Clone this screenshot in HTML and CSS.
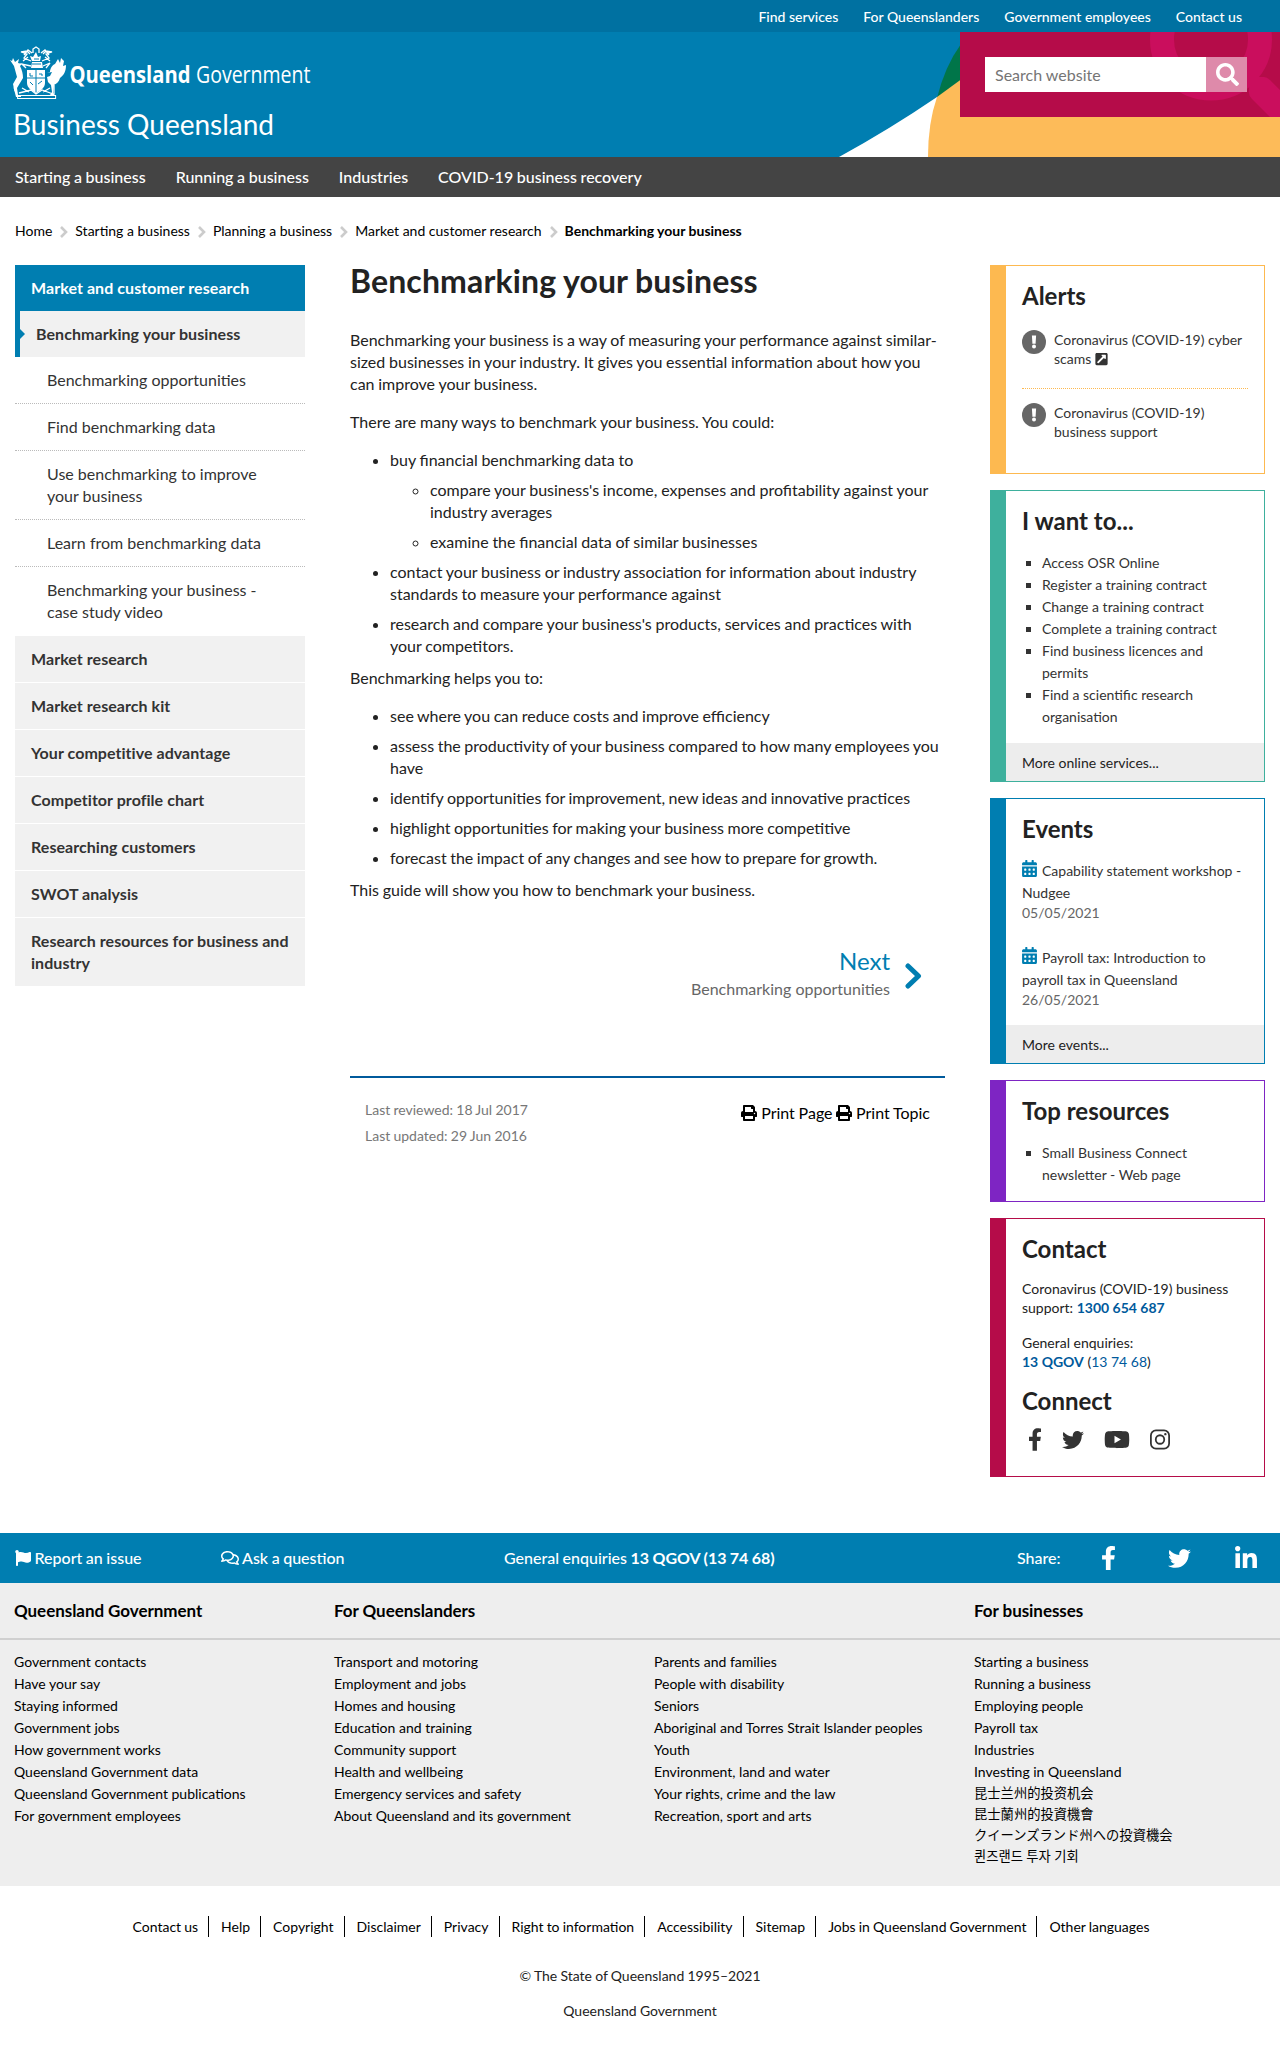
FILE: index.html
```html
<!DOCTYPE html>
<html lang="en">
<head>
<meta charset="utf-8">
<title>Benchmarking your business | Business Queensland</title>
<link rel="stylesheet" href="styles.css">
</head>
<body>
<svg class="defs" width="0" height="0" aria-hidden="true">
  <symbol id="i-search" viewBox="0 0 512 512"><path d="M505 442.7L405.300 343c-4.500-4.500-10.600-7-17-7H372c27.600-35.300 44-79.700 44-128C416 93.100 322.900 0 208 0S0 93.100 0 208s93.100 208 208 208c48.300 0 92.700-16.400 128-44v16.300c0 6.400 2.500 12.500 7 17l99.700 99.700c9.400 9.400 24.600 9.400 33.900 0l28.300-28.300c9.400-9.400 9.400-24.600.1-34zM208 336c-70.700 0-128-57.200-128-128 0-70.700 57.200-128 128-128 70.700 0 128 57.200 128 128 0 70.700-57.200 128-128 128z"/></symbol>
  <symbol id="i-fb" viewBox="0 0 320 512"><path d="M279.140 288l14.220-92.660h-88.910v-60.130c0-25.350 12.420-50.060 52.240-50.060h40.420V6.260S260.430 0 225.360 0c-73.220 0-121.080 44.380-121.080 124.720v70.620H22.890V288h81.390v224h100.170V288z"/></symbol>
  <symbol id="i-tw" viewBox="0 0 512 512"><path d="M459.370 151.716c.325 4.548.325 9.097.325 13.645 0 138.720-105.583 298.558-298.558 298.558-59.452 0-114.680-17.219-161.137-47.106 8.447.974 16.568 1.299 25.340 1.299 49.055 0 94.213-16.568 130.274-44.832-46.132-.975-84.792-31.188-98.112-72.772 6.498.974 12.995 1.624 19.818 1.624 9.421 0 18.843-1.300 27.614-3.573-48.081-9.747-84.143-51.980-84.143-102.985v-1.299c13.969 7.797 30.214 12.670 47.431 13.319-28.264-18.843-46.781-51.005-46.781-87.391 0-19.492 5.197-37.360 14.294-52.954 51.655 63.675 129.300 105.258 216.365 109.807-1.624-7.797-2.599-15.918-2.599-24.040 0-57.828 46.782-104.934 104.934-104.934 30.213 0 57.502 12.670 76.670 33.137 23.715-4.548 46.456-13.320 66.599-25.340-7.798 24.366-24.366 44.833-46.132 57.827 21.117-2.273 41.584-8.122 60.426-16.243-14.292 20.791-32.161 39.308-52.628 54.253z"/></symbol>
  <symbol id="i-yt" viewBox="0 0 576 512"><path d="M549.655 124.083c-6.281-23.650-24.787-42.276-48.284-48.597C458.781 64 288 64 288 64S117.220 64 74.629 75.486c-23.497 6.322-42.003 24.947-48.284 48.597-11.412 42.867-11.412 132.305-11.412 132.305s0 89.438 11.412 132.305c6.281 23.650 24.787 41.500 48.284 47.821C117.220 448 288 448 288 448s170.780 0 213.371-11.486c23.497-6.321 42.003-24.171 48.284-47.821 11.412-42.867 11.412-132.305 11.412-132.305s0-89.438-11.412-132.305zm-317.510 213.508V175.185l142.739 81.205-142.739 81.201z"/></symbol>
  <symbol id="i-ig" viewBox="0 0 448 512"><path fill-rule="evenodd" d="M132 32h184a132 132 0 0 1 132 132v184a132 132 0 0 1-132 132H132A132 132 0 0 1 0 348V164A132 132 0 0 1 132 32zm3 40a95 95 0 0 0-95 95v178a95 95 0 0 0 95 95h178a95 95 0 0 0 95-95V167a95 95 0 0 0-95-95zM224 141a115 115 0 1 1 0 230 115 115 0 0 1 0-230zm0 40a75 75 0 1 0 0 150 75 75 0 0 0 0-150zM344 109a27 27 0 1 1 0 54 27 27 0 0 1 0-54z"/></symbol>
  <symbol id="i-in" viewBox="0 0 448 512"><path d="M100.280 448H7.400V148.900h92.880zM53.790 108.100C24.090 108.100 0 83.500 0 53.800a53.790 53.790 0 0 1 107.580 0c0 29.700-24.100 54.300-53.790 54.300zM447.900 448h-92.680V302.400c0-34.700-.7-79.200-48.290-79.200-48.290 0-55.690 37.700-55.690 76.700V448h-92.780V148.900h89.080v40.800h1.300c12.400-23.500 42.690-48.300 87.880-48.300 94 0 111.280 61.900 111.280 142.300V448z"/></symbol>
  <symbol id="i-flag" viewBox="0 0 512 512"><path d="M349.565 98.783C295.978 98.783 251.721 64 184.348 64c-24.955 0-47.309 4.384-68.045 12.013a55.947 55.947 0 0 0 3.586-23.562C118.117 24.015 94.806 1.206 66.338.048 34.345-1.254 8 24.296 8 56c0 19.026 9.497 35.825 24 45.945V488c0 13.255 10.745 24 24 24h16c13.255 0 24-10.745 24-24v-94.400c28.311-12.064 63.582-22.122 114.435-22.122 53.588 0 97.844 34.783 165.217 34.783 48.169 0 86.667-16.294 122.505-40.858C506.840 359.452 512 349.571 512 339.045v-243.100c0-23.393-24.269-38.870-45.485-29.016-34.338 15.948-76.454 31.854-116.950 31.854z"/></symbol>
  <symbol id="i-chat" viewBox="0 0 576 512"><path d="M532 386.200c27.500-27.100 44-61.100 44-98.200 0-80-76.500-146.100-176.200-157.900C368.300 72.500 294.300 32 208 32 93.100 32 0 103.600 0 192c0 37 16.500 71 44 98.200-15.300 30.700-37.300 54.500-37.700 54.900-6.300 6.700-8.100 16.500-4.400 25 3.600 8.500 12 14 21.200 14 53.500 0 96.700-20.200 125.200-38.800 9.200 2.100 18.700 3.700 28.400 4.900C208.100 407.600 281.800 448 368 448c20.800 0 40.800-2.400 59.800-6.800C456.300 459.700 499.400 480 553 480c9.200 0 17.500-5.500 21.200-14 3.600-8.500 1.900-18.300-4.400-25-.4-.3-22.500-24.100-37.800-54.800zm-392.800-92.300L122.100 305c-14.100 9.100-28.500 16.300-43.100 21.400 2.700-4.700 5.400-9.700 8-14.800l15.500-31.100L77.700 256C64.200 242.600 48 220.700 48 192c0-60.700 73.300-112 160-112s160 51.300 160 112-73.300 112-160 112c-16.500 0-33-1.900-49-5.600l-19.800-4.500zM498.300 352l-24.700 24.400 15.500 31.100c2.600 5.100 5.300 10.100 8 14.800-14.600-5.100-29-12.300-43.100-21.400l-17.100-11.100-19.900 4.600c-16 3.700-32.500 5.600-49 5.600-54 0-102.200-20.100-131.300-49.700C338 339.500 416 272.900 416 192c0-3.400-.4-6.700-.7-10C479.700 196.500 528 238.800 528 288c0 28.700-16.200 50.600-29.700 64z"/></symbol>
  <symbol id="i-print" viewBox="0 0 512 512"><path d="M448 192V77.250c0-8.490-3.370-16.620-9.370-22.630L393.370 9.370c-6-6-14.140-9.370-22.630-9.370H96C78.330 0 64 14.330 64 32v160c-35.350 0-64 28.650-64 64v112c0 8.840 7.160 16 16 16h48v96c0 17.670 14.330 32 32 32h320c17.670 0 32-14.330 32-32v-96h48c8.840 0 16-7.160 16-16V256c0-35.350-28.650-64-64-64zm-64 256H128v-96h256v96zm0-224H128V64h192v48c0 8.840 7.160 16 16 16h48v96zm48 72c-13.250 0-24-10.750-24-24 0-13.260 10.750-24 24-24s24 10.740 24 24c0 13.250-10.750 24-24 24z"/></symbol>
  <symbol id="i-cal" viewBox="0 0 448 512"><path fill-rule="evenodd" d="M0 464c0 26.500 21.500 48 48 48h352c26.500 0 48-21.500 48-48V192H0zM64 268a12 12 0 0 1 12-12h40a12 12 0 0 1 12 12v40a12 12 0 0 1-12 12H76a12 12 0 0 1-12-12zm128 0a12 12 0 0 1 12-12h40a12 12 0 0 1 12 12v40a12 12 0 0 1-12 12h-40a12 12 0 0 1-12-12zm128 0a12 12 0 0 1 12-12h40a12 12 0 0 1 12 12v40a12 12 0 0 1-12 12h-40a12 12 0 0 1-12-12zM64 396a12 12 0 0 1 12-12h40a12 12 0 0 1 12 12v40a12 12 0 0 1-12 12H76a12 12 0 0 1-12-12zm128 0a12 12 0 0 1 12-12h40a12 12 0 0 1 12 12v40a12 12 0 0 1-12 12h-40a12 12 0 0 1-12-12zm128 0a12 12 0 0 1 12-12h40a12 12 0 0 1 12 12v40a12 12 0 0 1-12 12h-40a12 12 0 0 1-12-12zM400 64h-48V16c0-8.800-7.200-16-16-16h-32c-8.800 0-16 7.200-16 16v48H160V16c0-8.800-7.200-16-16-16h-32c-8.800 0-16 7.200-16 16v48H48C21.500 64 0 85.500 0 112v48h448v-48c0-26.500-21.500-48-48-48z"/></symbol>
  <symbol id="i-ext" viewBox="0 0 448 512"><path d="M448 80v352c0 26.510-21.490 48-48 48H48c-26.510 0-48-21.490-48-48V80c0-26.510 21.490-48 48-48h352c26.510 0 48 21.490 48 48zm-88 16H248.029c-21.313 0-32.080 25.861-16.971 40.971l31.984 31.987L67.515 364.485c-4.686 4.686-4.686 12.284 0 16.971l31.029 31.029c4.687 4.686 12.285 4.686 16.971 0l195.526-195.526 31.988 31.991C358.058 263.977 384 253.425 384 231.979V120c0-13.255-10.745-24-24-24z"/></symbol>
  <symbol id="i-exc" viewBox="0 0 24 24"><circle cx="12" cy="12" r="12"/><path fill="#fff" d="M9.900 5.500h4.200l-.5 8.300h-3.200z"/><circle cx="12" cy="16.500" r="2" fill="#fff"/></symbol>
  <symbol id="i-chev" viewBox="0 0 8 12"><path fill="none" stroke="currentColor" stroke-width="2.600" d="M1 1l5 5-5 5"/></symbol>
</svg>

<header>
  <ul class="topnav"><li>Find services</li><li>For Queenslanders</li><li>Government employees</li><li>Contact us</li></ul>
  <div class="banner">
    <svg class="swoosh" width="444" height="125" viewBox="836 32 444 125" aria-hidden="true">
      <path fill="#fff" d="M839 157Q890 129 937 97L966 100V157z"/>
      <path fill="#007549" d="M961 44Q945 66 937 98L961 90z"/>
      <path fill="#fdbb59" d="M928 157Q928 123 937 97L961 79.500L1280 80V157z"/>
    </svg>
    <div class="brand">
      <svg width="320" height="68" viewBox="0 36 320 68" role="img" aria-label="Queensland Government">
        <g fill="#fff">
          <path d="M14 66l-4-6 2 1 1-3 2 4 4-3-1 4 4 1-2 2c2 4 3 8 3 12l-3 5-3 5 1 7h3v2h-5l-2-8-1-5 4-7z"/>
          <path d="M50 72c0-3 2-7 5-8l3-5 2 4 1-5 3 3-1 5 3-1c0 6-2 10-6 13-1 4-4 6-6 7l-1 8 2 2h-5l2-3-1-7-3-3-1-5 3-1 2-4-5 1z"/>
          <path d="M27 70h18v13c0 5-5 8-9 10-4-2-9-5-9-10z"/>
          <path d="M31 68l1-6h10l1 6zM32 61l-2-5 3 1 3-5 2 5 3-1-1 5z"/>
        </g>
        <g fill="none" stroke="#fff" stroke-width="1.300">
          <path d="M31 61l-7-3 3-4-6-2 6-1 3 3M42 61l7-3-3-4 6-2-6-1-3 3M31 66l-9-2 4 4M43 66l7-3-4 5M33 53v-4l3-2 3 2v4M28 57l-5 4M45 57l5 4M24 55l4-5 4 3M49 55l-4-5-4 3"/>
          <path d="M17 84c-4 2-3 7 0 9M54 85v9M19 93l12-3 5 4 6-4 11 4M22 88l7 4M50 88l-7 4"/>
          <rect x="17.600" y="95.500" width="38" height="3" stroke-width="1"/>
        </g>
        <g stroke="#007eb1" stroke-width="1" fill="none"><path d="M36 70v22M27 78h18M30 73v3h3M39 74h3v2M30 82l3 3M42 81l-4 3M32 64h9M34 59h5"/></g>
        <text class="logo-b" x="69.500" y="82.500" textLength="121" lengthAdjust="spacingAndGlyphs">Queensland</text>
        <text class="logo-r" x="196" y="82.500" textLength="114.500" lengthAdjust="spacingAndGlyphs">Government</text>
      </svg>
      <div class="site">Business Queensland</div>
    </div>
    <div class="search">
      <svg class="ring" width="320" height="85" viewBox="960 32 320 85" aria-hidden="true"><circle cx="1211" cy="39.500" r="49" fill="none" stroke="#ca0e5d" stroke-width="24"/><path fill="#ca0e5d" d="M1250 77h14q3 0 6 3l10 10v27h-10l-18-18q-4-4-3-9z"/></svg>
      <div class="searchbox"><span>Search website</span><b><svg width="23" height="23"><use href="#i-search"/></svg></b></div>
    </div>
  </div>
  <ul class="mainnav"><li>Starting a business</li><li>Running a business</li><li>Industries</li><li>COVID-19 business recovery</li></ul>
</header>

<ol class="crumbs">
  <li>Home</li><li><svg width="8" height="12"><use href="#i-chev"/></svg>Starting a business</li><li><svg width="8" height="12"><use href="#i-chev"/></svg>Planning a business</li><li><svg width="8" height="12"><use href="#i-chev"/></svg>Market and customer research</li><li class="here"><svg width="8" height="12"><use href="#i-chev"/></svg>Benchmarking your business</li>
</ol>

<div class="page">
  <nav class="side">
    <div class="head">Market and customer research</div>
    <div class="current">Benchmarking your business</div>
    <ul class="sub"><li>Benchmarking opportunities</li><li>Find benchmarking data</li><li>Use benchmarking to improve your business</li><li>Learn from benchmarking data</li><li>Benchmarking your business - case study video</li></ul>
    <ul class="more"><li>Market research</li><li>Market research kit</li><li>Your competitive advantage</li><li>Competitor profile chart</li><li>Researching customers</li><li>SWOT analysis</li><li>Research resources for business and industry</li></ul>
  </nav>

  <main>
    <h1>Benchmarking your business</h1>
    <p>Benchmarking your business is a way of measuring your performance against similar-sized businesses in your industry. It gives you essential information about how you can improve your business.</p>
    <p>There are many ways to benchmark your business. You could:</p>
    <ul>
      <li>buy financial benchmarking data to
        <ul><li>compare your business's income, expenses and profitability against your industry averages</li><li>examine the financial data of similar businesses</li></ul></li>
      <li>contact your business or industry association for information about industry standards to measure your performance against</li>
      <li>research and compare your business's products, services and practices with your competitors.</li>
    </ul>
    <p>Benchmarking helps you to:</p>
    <ul>
      <li>see where you can reduce costs and improve efficiency</li>
      <li>assess the productivity of your business compared to how many employees you have</li>
      <li>identify opportunities for improvement, new ideas and innovative practices</li>
      <li>highlight opportunities for making your business more competitive</li>
      <li>forecast the impact of any changes and see how to prepare for growth.</li>
    </ul>
    <p>This guide will show you how to benchmark your business.</p>
    <div class="next">
      <div><div class="next-label">Next</div><div class="next-title">Benchmarking opportunities</div></div>
      <svg width="17" height="26" viewBox="0 0 17 26"><path d="M3 3l10.500 10L3 23" fill="none" stroke="#007eb1" stroke-width="5" stroke-linecap="round" stroke-linejoin="round"/></svg>
    </div>
    <div class="meta">
      <div class="dates"><div>Last reviewed: 18 Jul 2017</div><div>Last updated: 29 Jun 2016</div></div>
      <div class="print"><svg width="16" height="16"><use href="#i-print"/></svg> <span>Print Page</span> <svg width="16" height="16"><use href="#i-print"/></svg> <span>Print Topic</span></div>
    </div>
  </main>

  <aside>
    <section class="card alerts">
      <h2>Alerts</h2>
      <div class="alert"><svg width="24" height="24"><use href="#i-exc"/></svg><span>Coronavirus (COVID-19) cyber scams <svg class="ext" width="13" height="14"><use href="#i-ext"/></svg></span></div>
      <div class="alert"><svg width="24" height="24"><use href="#i-exc"/></svg><span>Coronavirus (COVID-19) business support</span></div>
    </section>
    <section class="card want">
      <h2>I want to...</h2>
      <ul><li>Access OSR Online</li><li>Register a training contract</li><li>Change a training contract</li><li>Complete a training contract</li><li>Find business licences and permits</li><li>Find a scientific research organisation</li></ul>
      <div class="foot">More online services...</div>
    </section>
    <section class="card events">
      <h2>Events</h2>
      <div class="event"><svg width="15" height="17"><use href="#i-cal"/></svg>Capability statement workshop - Nudgee<time>05/05/2021</time></div>
      <div class="event"><svg width="15" height="17"><use href="#i-cal"/></svg>Payroll tax: Introduction to payroll tax in Queensland<time>26/05/2021</time></div>
      <div class="foot">More events...</div>
    </section>
    <section class="card top">
      <h2>Top resources</h2>
      <ul><li>Small Business Connect newsletter - Web page</li></ul>
    </section>
    <section class="card contact">
      <h2>Contact</h2>
      <p>Coronavirus (COVID-19) business support: <a><b>1300 654 687</b></a></p>
      <p>General enquiries:<br><a><b>13 QGOV</b></a> (<a>13 74 68</a>)</p>
      <h2>Connect</h2>
      <div class="social"><svg width="14" height="23"><use href="#i-fb"/></svg><svg width="22" height="22"><use href="#i-tw"/></svg><svg width="26" height="23"><use href="#i-yt"/></svg><svg width="20" height="23"><use href="#i-ig"/></svg></div>
    </section>
  </aside>
</div>

<footer>
  <div class="bar">
    <span class="report"><svg width="16" height="16"><use href="#i-flag"/></svg> Report an issue</span>
    <span class="ask"><svg width="18" height="16"><use href="#i-chat"/></svg> Ask a question</span>
    <span class="enq">General enquiries <b>13 QGOV (13 74 68)</b></span>
    <span class="share">Share:<svg class="s1" width="15" height="24"><use href="#i-fb"/></svg><svg class="s2" width="23" height="23"><use href="#i-tw"/></svg><svg class="s3" width="22" height="25"><use href="#i-in"/></svg></span>
  </div>
  <div class="sitemap">
    <div class="heads"><h3>Queensland Government</h3><h3>For Queenslanders</h3><h3></h3><h3>For businesses</h3></div>
    <div class="cols">
      <ul><li>Government contacts</li><li>Have your say</li><li>Staying informed</li><li>Government jobs</li><li>How government works</li><li>Queensland Government data</li><li>Queensland Government publications</li><li>For government employees</li></ul>
      <ul><li>Transport and motoring</li><li>Employment and jobs</li><li>Homes and housing</li><li>Education and training</li><li>Community support</li><li>Health and wellbeing</li><li>Emergency services and safety</li><li>About Queensland and its government</li></ul>
      <ul><li>Parents and families</li><li>People with disability</li><li>Seniors</li><li>Aboriginal and Torres Strait Islander peoples</li><li>Youth</li><li>Environment, land and water</li><li>Your rights, crime and the law</li><li>Recreation, sport and arts</li></ul>
      <ul><li>Starting a business</li><li>Running a business</li><li>Employing people</li><li>Payroll tax</li><li>Industries</li><li>Investing in Queensland</li><li class="cjk" lang="zh-CN">昆士兰州的投资机会</li><li class="cjk" lang="zh-TW">昆士蘭州的投資機會</li><li class="cjk" lang="ja">クイーンズランド州への投資機会</li><li class="cjk" lang="ko">퀸즈랜드 투자 기회</li></ul>
    </div>
  </div>
  <ul class="legal"><li>Contact us</li><li>Help</li><li>Copyright</li><li>Disclaimer</li><li>Privacy</li><li>Right to information</li><li>Accessibility</li><li>Sitemap</li><li>Jobs in Queensland Government</li><li>Other languages</li></ul>
  <p class="copy">© The State of Queensland 1995–2021</p>
  <p class="copy qg">Queensland Government</p>
</footer>
</body>
</html>
```
FILE: styles.css
```css
* { box-sizing: border-box; }
body { margin: 0; font: 15px/22px Lato, "Noto Sans CJK SC", sans-serif; color: #222; background: #fff; }
ul, ol { margin: 0; padding: 0; list-style: none; }
h1, h2, h3, p { margin: 0; }
svg { fill: currentColor; flex: none; }
.defs { position: absolute; }

.topnav { height: 32px; background: #0071a1; color: #fff; display: flex; justify-content: flex-end; gap: 25px; padding: 0 38px 0 0; font-size: 14px; font-weight: 500; line-height: 34px; }
.banner { position: relative; height: 125px; background: #007eb1; display: flex; justify-content: space-between; }
.swoosh { position: absolute; right: 0; top: 0; }
.brand { padding-top: 4px; color: #fff; height: 125px; }
.brand svg { display: block; overflow: visible; }
.logo-b, .logo-r { font-family: "Open Sans", sans-serif; font-size: 23px; fill: #fff; }
.logo-b { font-weight: 700; }
.site { font-size: 28px; line-height: 34px; padding: 3px 0 0 13px; }
.search { position: relative; width: 320px; height: 85px; background: #b50c49; padding: 25px 0 0 25px; }
.ring { position: absolute; left: 0; top: 0; }
.searchbox { position: relative; display: flex; width: 262px; height: 35px; background: #fff; color: #757575; font-size: 16px; line-height: 36px; }
.searchbox span { width: 221px; padding-left: 10px; }
.searchbox b { width: 41px; background: #de8aaa; color: #fff; display: flex; justify-content: center; padding: 6px 0 0 1px; }
.mainnav { height: 40px; background: #444; color: #fff; display: flex; gap: 30px; padding-left: 15px; font-size: 16px; font-weight: 500; line-height: 40px; word-spacing: -.4px; }

.crumbs { display: flex; padding: 23px 15px 0; font-size: 14px; color: #000; line-height: 22px; }
.crumbs svg { color: #ccc; margin: 0 7px 0 8px; vertical-align: -2px; }
.here { font-weight: 700; }

.page { display: grid; grid-template-columns: 290px 595px 275px; column-gap: 45px; padding: 23px 15px 0; height: 1291px; align-items: start; }
.side { font-size: 16px; color: #333; }
.head { background: #007eb1; color: #fff; font-weight: 700; padding: 12px 16px; letter-spacing: .07px; }
.current { position: relative; background: #f1f1f1; border-left: 5px solid #007eb1; font-weight: 700; padding: 12px 16px; letter-spacing: .07px; }
.current::before { content: ""; position: absolute; left: 0; top: 18px; border: 5px solid transparent; border-left-color: #007eb1; border-right: 0; }
.sub li { padding: 12px 32px; border-bottom: 1px dotted #bbb; }
.sub li:last-child { border-color: transparent; }
.more li { padding: 12px 8px 12px 16px; background: #f1f1f1; font-weight: 700; border-bottom: 1px solid #fff; letter-spacing: .05px; }
.more li:last-child { border: 0; }

h1 { font-size: 32px; line-height: 32px; font-weight: 700; margin-bottom: 32px; letter-spacing: .13px; }
main { font-size: 16px; word-spacing: -.35px; }
main p { margin-bottom: 16px; }
main ul { list-style: disc; padding-left: 40px; margin-bottom: 10px; }
main ul ul { list-style: circle; margin: 8px 0; }
main li { margin-bottom: 8px; }
main p + ul ~ p + ul { word-spacing: -.55px; }
.next { display: flex; justify-content: flex-end; align-items: center; gap: 15px; padding: 29px 23px 0 0; text-align: right; color: #666; word-spacing: 0; }
.next svg { margin-top: 5px; }
.next-label { font-size: 24px; line-height: 30px; color: #007eb1; }
.next-title { line-height: 25px; }
.meta { margin-top: 75px; border-top: 2px solid #005a9c; padding: 19px 15px; display: flex; justify-content: space-between; }
.dates { font-size: 14px; line-height: 26px; color: #777; }
.print { color: #000; line-height: 31px; }
.print svg { vertical-align: -2px; }

aside { display: grid; row-gap: 16px; font-size: 14px; line-height: 22px; }
.card { border: 1px solid; border-left-width: 16px; padding: 0 16px; display: flex; flex-direction: column; }
.card > * { color: #222; }
h2 { font-size: 24px; line-height: 30px; font-weight: 700; padding-top: 15px; }
.alerts { border-color: #fdb950; height: 209px; }
.want { border-color: #3eb09d; height: 292px; }
.events { border-color: #007eb1; height: 266px; }
.top { border-color: #7e25c3; height: 122px; }
.contact { border-color: #b50c49; height: 259px; }
.card .alert { display: flex; gap: 8px; line-height: 19px; margin-top: 19px; padding-bottom: 20px; color: #666; }
.alert span { color: #333; }
.card .alert + .alert { border-top: 1px dotted #fdb950; padding-top: 14px; margin-top: 0; }
.ext { vertical-align: -2px; }
.card ul { list-style: square; padding: 16px 0 0 20px; line-height: 22px; color: #333; }
.foot { margin: auto -16px 0; padding: 9px 16px; height: 38px; background: #ededed; }
.event { margin-top: 16px; height: 72px; color: #333; }
.event svg { color: #007eb1; margin-right: 5px; vertical-align: -1px; }
.event + .event { margin-top: 15px; }
.event time { display: block; color: #666; line-height: 18px; }
.contact p { line-height: 19px; margin-top: 15px; }
.contact h2 + p { margin-bottom: 1px; }
.contact p + h2 { padding-top: 15px; }
.contact a { color: #005a9c; }
.social { display: flex; align-items: center; gap: 20px; margin-top: 12px; padding-left: 6px; color: #333; }

.bar { height: 50px; background: #007eb1; color: #fff; font-size: 16px; line-height: 50px; display: grid; grid-template-columns: 206px 283px 513px 1fr; padding-left: 15px; font-weight: 500; word-spacing: -.5px; }
.bar svg { vertical-align: -2px; }
.share { display: flex; align-items: center; }
.bar .s1 { margin-left: 40px; }
.bar .s2 { margin-left: 52px; }
.bar .s3 { margin-left: 44px; }
.sitemap { background: #eee; height: 303px; color: #000; }
.heads, .cols { display: grid; grid-template-columns: repeat(4, 320px); padding-left: 14px; }
.heads { height: 57px; border-bottom: 2px solid #d0d0d0; }
h3 { font-size: 17px; line-height: 56px; letter-spacing: -.05px; }
.cols { padding-top: 11px; font-size: 14px; line-height: 22px; }
.cjk { font-size: 13.300px; line-height: 21px; }
.legal { display: flex; justify-content: center; padding-top: 30px; font-size: 14px; line-height: 21px; color: #000; word-spacing: -.5px; }
.legal li { padding: 0 10px 0 12px; border-right: 1px solid #000; }
.legal li:last-child { border: 0; }
.copy { text-align: center; font-size: 14px; margin-top: 28px; word-spacing: -.4px; }
.qg { margin-top: 13px; }
```
